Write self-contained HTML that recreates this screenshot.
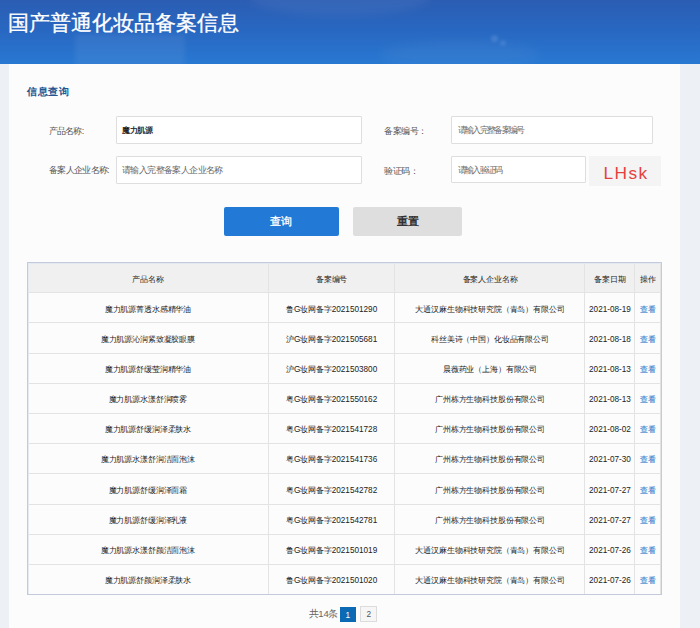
<!DOCTYPE html>
<html><head><meta charset="utf-8">
<style>
*{box-sizing:border-box;margin:0;padding:0}
html,body{width:700px;height:628px;overflow:hidden;background:#edf0f4;font-family:"Liberation Sans",sans-serif;color:#555}
.hdr{position:absolute;left:0;top:0;width:700px;height:64px;background:linear-gradient(180deg,#2b5db3 0%,#2868c2 50%,#2878d2 100%);overflow:hidden}
.hdr i{position:absolute;border-radius:50%;background:rgba(255,255,255,0.05);filter:blur(5px)}
.hdr .t{position:absolute;left:8px;top:9px;font-size:20.5px;color:#fff;white-space:nowrap;font-weight:500;-webkit-text-stroke:0.3px #fff}
.panel{position:absolute;left:9px;top:64px;width:671px;height:564px;background:#fcfcfc}
.abs{position:absolute;white-space:nowrap}
.sec{left:27px;top:86px;font-size:9.8px;letter-spacing:0.5px;font-weight:bold;color:#23548f}
.lbl{font-size:9px;color:#555;font-weight:500;letter-spacing:-0.7px}
.inp{position:absolute;background:#fff;border:1px solid #dedede;border-radius:1px}
.ph{font-size:8px;color:#777;font-weight:500}
.btn{position:absolute;border-radius:2px;text-align:center;font-size:11px;font-weight:500}
table{position:absolute;left:27px;top:262px;width:634px;border-collapse:collapse;table-layout:fixed;font-size:8px;letter-spacing:-0.15px;color:#222;font-weight:500;border:1px solid #e3e3e3}
td,th{border:1px solid #e3e3e3;text-align:center;font-weight:500;height:30.2px;padding:2.5px 0 0 0;white-space:nowrap}
tr{height:30.2px}
th{background:#f0f0f0;height:30px;padding-top:3.8px}
td b{font-weight:500;letter-spacing:0;font-size:8.2px}
td.v{color:#3a80cc;letter-spacing:0;-webkit-text-stroke:0.1px #3a80cc}
</style></head><body>
<div class="hdr"><b style="position:absolute;left:75px;top:34px;width:110px;height:34px;background:rgba(255,255,255,0.06);filter:blur(2px)"></b><i style="left:250px;top:-20px;width:180px;height:36px"></i><i style="left:380px;top:40px;width:160px;height:30px;background:rgba(255,255,255,0.04)"></i><i style="left:491px;top:35px;width:7px;height:7px;background:rgba(255,255,255,0.12);filter:blur(1.5px)"></i><i style="left:500px;top:40px;width:6px;height:6px;background:rgba(255,255,255,0.1);filter:blur(1.5px)"></i><div class="t">国产普通化妆品备案信息</div></div>
<div class="panel"></div>
<div class="abs sec">信息查询</div>

<div class="abs lbl" style="left:48.5px;top:124.5px">产品名称:</div>
<div class="inp" style="left:116px;top:116px;width:246px;height:28px"></div>
<div class="abs" style="left:122px;top:125px;font-size:8px;letter-spacing:-0.3px;color:#111;font-weight:500;-webkit-text-stroke:0.25px #111">魔力肌源</div>

<div class="abs lbl" style="left:49px;top:164px">备案人企业名称:</div>
<div class="inp" style="left:116px;top:155.5px;width:246px;height:28px"></div>
<div class="abs ph" style="left:122px;top:163.8px;font-size:9.3px;letter-spacing:-0.6px;color:#666">请输入完整备案人企业名称</div>

<div class="abs lbl" style="left:384px;top:124.5px;letter-spacing:-0.5px">备案编号：</div>
<div class="inp" style="left:451px;top:116px;width:202px;height:28px"></div>
<div class="abs ph" style="left:457.5px;top:124.8px;font-size:8.6px;letter-spacing:-1.65px;color:#6a6a6a">请输入完整备案编号</div>

<div class="abs lbl" style="left:384px;top:164.5px;letter-spacing:-0.5px">验证码：</div>
<div class="inp" style="left:451px;top:156px;width:134.5px;height:27px"></div>
<div class="abs ph" style="left:457.5px;top:164.5px;font-size:8.6px;letter-spacing:-1.65px;color:#6a6a6a">请输入验证码</div>
<div class="abs" style="left:589px;top:156.3px;width:72px;height:29.3px;background:#f4f4f4"></div>
<div class="abs" style="left:603.5px;top:163px;font-size:17.3px;color:#e44040;letter-spacing:1.4px">LHsk</div>

<div class="btn" style="left:223.5px;top:207px;width:115.5px;height:28.5px;background:#2279d6;color:#fff;line-height:28.5px;-webkit-text-stroke:0.3px #fff">查询</div>
<div class="btn" style="left:353.3px;top:207px;width:109px;height:28.5px;background:#dedede;color:#333;line-height:28.5px;font-weight:bold">重置</div>

<table>
<tr><th style="width:240.8px">产品名称</th><th style="width:126.7px">备案编号</th><th style="width:190px">备案人企业名称</th><th style="width:50px">备案日期</th><th style="width:25.7px">操作</th></tr>
<tr><td>魔力肌源菁透水感精华油</td><td>鲁<b>G</b>妆网备字<b>2021501290</b></td><td>大通汉麻生物科技研究院（青岛）有限公司</td><td><b>2021-08-19</b></td><td class="v">查看</td></tr>
<tr><td>魔力肌源沁润紧致凝胶眼膜</td><td>沪<b>G</b>妆网备字<b>2021505681</b></td><td>科丝美诗（中国）化妆品有限公司</td><td><b>2021-08-18</b></td><td class="v">查看</td></tr>
<tr><td>魔力肌源舒缓莹润精华油</td><td>沪<b>G</b>妆网备字<b>2021503800</b></td><td>晨薇药业（上海）有限公司</td><td><b>2021-08-13</b></td><td class="v">查看</td></tr>
<tr><td>魔力肌源水漾舒润喷雾</td><td>粤<b>G</b>妆网备字<b>2021550162</b></td><td>广州栋方生物科技股份有限公司</td><td><b>2021-08-13</b></td><td class="v">查看</td></tr>
<tr><td>魔力肌源舒缓润泽柔肤水</td><td>粤<b>G</b>妆网备字<b>2021541728</b></td><td>广州栋方生物科技股份有限公司</td><td><b>2021-08-02</b></td><td class="v">查看</td></tr>
<tr><td>魔力肌源水漾舒润洁面泡沫</td><td>粤<b>G</b>妆网备字<b>2021541736</b></td><td>广州栋方生物科技股份有限公司</td><td><b>2021-07-30</b></td><td class="v">查看</td></tr>
<tr><td>魔力肌源舒缓润泽面霜</td><td>粤<b>G</b>妆网备字<b>2021542782</b></td><td>广州栋方生物科技股份有限公司</td><td><b>2021-07-27</b></td><td class="v">查看</td></tr>
<tr><td>魔力肌源舒缓润泽乳液</td><td>粤<b>G</b>妆网备字<b>2021542781</b></td><td>广州栋方生物科技股份有限公司</td><td><b>2021-07-27</b></td><td class="v">查看</td></tr>
<tr><td>魔力肌源水漾舒颜洁面泡沫</td><td>鲁<b>G</b>妆网备字<b>2021501019</b></td><td>大通汉麻生物科技研究院（青岛）有限公司</td><td><b>2021-07-26</b></td><td class="v">查看</td></tr>
<tr><td>魔力肌源舒颜润泽柔肤水</td><td>鲁<b>G</b>妆网备字<b>2021501020</b></td><td>大通汉麻生物科技研究院（青岛）有限公司</td><td><b>2021-07-26</b></td><td class="v">查看</td></tr>
</table>
<div class="abs" style="left:27px;top:262px;width:634.5px;height:333px;border:1px solid #c2cadb;box-shadow:inset 1px 1px 0 #e3e8f1"></div>

<div class="abs" style="left:308.5px;top:608px;font-size:9.5px;letter-spacing:-0.2px;color:#666;font-weight:500">共14条</div>
<div class="abs" style="left:339.6px;top:606.6px;width:16.5px;height:15px;background:#0c6ab4;color:#fff;font-size:8.3px;text-align:center;line-height:16px">1</div>
<div class="abs" style="left:360.3px;top:606.3px;width:16.8px;height:15.3px;border:1px solid #dcdcdc;background:#f6f6f6;color:#555;font-size:8.3px;text-align:center;line-height:14.5px">2</div>
</body></html>
